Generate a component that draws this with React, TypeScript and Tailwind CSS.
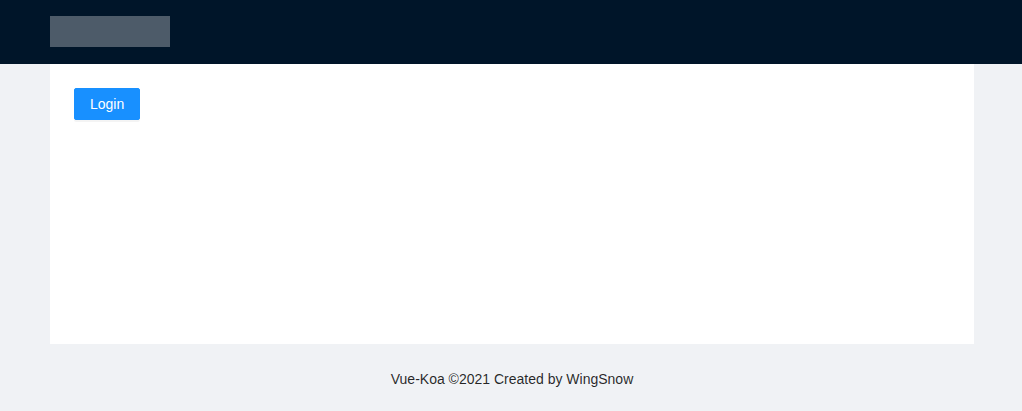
export default function App() {
  return (
    <div
      className="min-h-screen bg-[#f0f2f5] flex flex-col text-sm text-[rgba(0,0,0,0.85)]"
      style={{ fontFamily: '"Liberation Sans", Arial, sans-serif' }}
    >
      {/* Header */}
      <header className="h-16 bg-[#001529] px-[50px] pt-4">
        <div className="w-[120px] h-[31px] bg-[rgba(255,255,255,0.3)]" />
      </header>

      {/* Content */}
      <main className="pl-[50px] pr-[48px]">
        <div className="bg-white h-[280px] p-6">
          <button className="h-8 px-[15px] border border-[#1890ff] rounded-[2px] bg-[#1890ff] text-white text-sm shadow-[0_2px_0_rgba(0,0,0,0.045)]">
            Login
          </button>
        </div>
      </main>

      {/* Footer */}
      <footer className="py-6 pl-[50px] pr-[48px] text-center leading-[22px]">
        Vue-Koa ©2021 Created by WingSnow
      </footer>
    </div>
  );
}
